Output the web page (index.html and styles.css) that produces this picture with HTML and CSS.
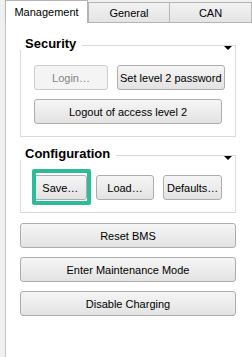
FILE: index.html
```html
<!DOCTYPE html>
<html lang="en">
<head>
    <meta charset="UTF-8">
    <meta name="viewport" content="width=device-width, initial-scale=1.0">
    <title>BMS Management</title>
    <link rel="stylesheet" href="styles.css">
</head>
<body>
    <div class="tabs">
        <div class="tab active">Management</div>
        <div class="tab">General</div>
        <div class="tab last">CAN</div>
    </div>

    <div class="pane">
        <div class="group">
            <div class="group-title">Security</div>
            <span class="collapse"></span>
            <div class="group-body">
                <div class="row">
                    <button class="btn small" disabled>Login…</button>
                    <button class="btn grow">Set level 2 password</button>
                </div>
                <div class="row">
                    <button class="btn grow">Logout of access level 2</button>
                </div>
            </div>
        </div>

        <div class="group config">
            <div class="group-title">Configuration</div>
            <span class="collapse"></span>
            <div class="group-body">
                <div class="row">
                    <div class="focus-wrap">
                        <button class="btn">Save…</button>
                    </div>
                    <button class="btn grow">Load…</button>
                    <button class="btn grow">Defaults…</button>
                </div>
            </div>
        </div>

        <!-- Actions below the groups -->
        <div class="actions">
            <button class="btn">Reset BMS</button>
            <button class="btn">Enter Maintenance Mode</button>
            <button class="btn">Disable Charging</button>
        </div>
    </div>
</body>
</html>
```

FILE: styles.css
```css
body {
    margin: 0;
    background-color: #f0f0f0;
    font-family: "Liberation Sans", Arial, sans-serif;
    font-size: 11px;
    color: #000;
}

.tabs {
    display: flex;
    align-items: flex-end;
    padding: 5px 0 0 5px;
    height: 22px;
    box-sizing: border-box;
}

.tab {
    height: 20px;
    box-sizing: border-box;
    width: 82px;
    border: 1px solid #b4b4b4;
    border-bottom: none;
    background: linear-gradient(#f2f2f2, #e4e4e4);
    display: flex;
    align-items: center;
    justify-content: center;
    padding-top: 1px;
}

.tab.active {
    width: 83px;
    height: 23px;
    margin-bottom: -1px;
    background: #fff;
    position: relative;
    z-index: 1;
    padding-top: 0;
    padding-bottom: 1px;
}

.tab.last {
    border-left: none;
}

.pane {
    margin-left: 5px;
    height: calc(100vh - 22px);
    box-sizing: border-box;
    background: #fff;
    border-top: 1px solid #b4b4b4;
    border-left: 1px solid #c4c4c4;
    padding: 22px 16px 0 14px;
}

.group {
    position: relative;
    border: 1px solid #dadada;
    padding-bottom: 12px;
}

.group.config {
    margin-top: 18px;
}

.group-title {
    width: fit-content;
    height: 13px;
    margin: -9px 0 0 -6px;
    padding: 0 6px 0 10px;
    background: #fff;
    font-size: 13px;
    line-height: 13px;
    font-weight: bold;
}

.collapse {
    position: absolute;
    top: 0;
    right: 3px;
    width: 0;
    height: 0;
    border-left: 4px solid transparent;
    border-right: 4px solid transparent;
    border-top: 4px solid #000;
}

.group-body {
    padding: 15px 13px 0;
    display: flex;
    flex-direction: column;
    gap: 9px;
}

.row {
    display: flex;
    gap: 9px;
}

.btn {
    height: 25px;
    box-sizing: border-box;
    border: 1px solid #adadad;
    border-radius: 3px;
    background: linear-gradient(#f5f5f5, #e3e3e3);
    font-family: inherit;
    font-size: 11px;
    color: #000;
    padding: 0 2px;
    white-space: nowrap;
}

.btn.small {
    flex: 0 0 74px;
}

.btn.grow {
    flex: 1;
}

.btn:disabled {
    background: #f4f4f4;
    border-color: #cdcdcd;
    color: #838383;
}

.focus-wrap {
    flex: 1;
    display: flex;
    position: relative;
}

.focus-wrap .btn {
    flex: 1;
}

.focus-wrap::after {
    content: "";
    position: absolute;
    top: -6px;
    bottom: -5px;
    left: -2px;
    right: -4px;
    border: 4px solid #2ebb98;
    border-radius: 2px;
}

.actions {
    margin-top: 10px;
    display: flex;
    flex-direction: column;
    gap: 9px;
}
```
